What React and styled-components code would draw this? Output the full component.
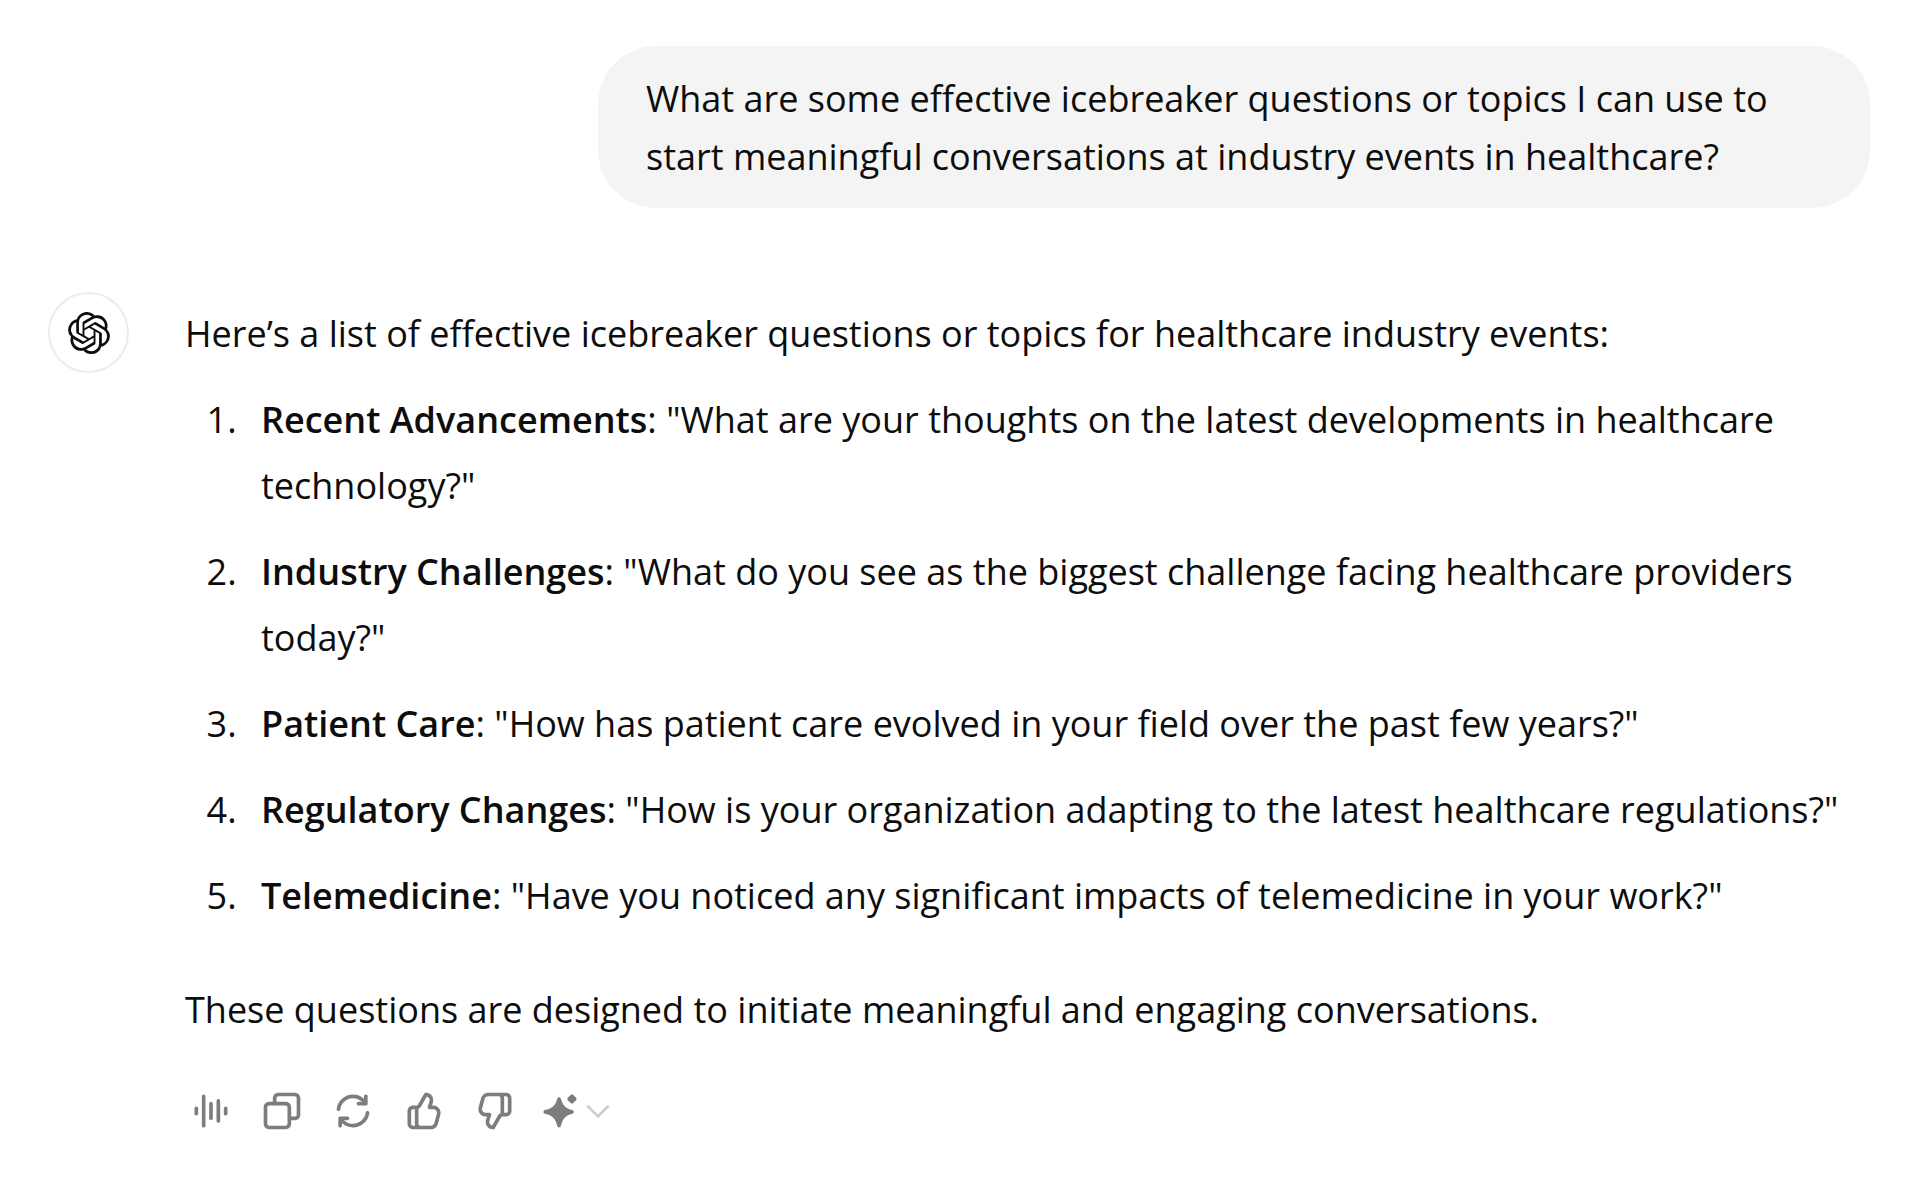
import React from "react";
import styled, { createGlobalStyle } from "styled-components";
import { SiOpenai } from "react-icons/si";

const GlobalStyle = createGlobalStyle`
  * {
    box-sizing: border-box;
  }

  body {
    margin: 0;
    background: #ffffff;
    color: #0d0d0d;
    font-family: "Open Sans", "Noto Sans", sans-serif;
    font-size: 36px;
  }
`;

const Conversation = styled.main`
  display: flex;
  flex-direction: column;
  gap: 84px;
  padding: 46px 50px 24px 48px;
`;

const UserMessage = styled.div`
  align-self: flex-end;
  width: 70%;
  max-width: 1272px;
  padding: 24px 48px 22px;
  border-radius: 58px;
  background: #f4f4f4;
  line-height: 58px;
`;

const AssistantMessage = styled.article`
  display: flex;
  align-items: flex-start;
  gap: 56px;
`;

const Avatar = styled.div`
  display: flex;
  flex-shrink: 0;
  align-items: center;
  justify-content: center;
  width: 81px;
  height: 81px;
  border: 2px solid #ececec;
  border-radius: 50%;
`;

const Content = styled.div`
  flex: 1;
  min-width: 0;
  padding-top: 9px;
  line-height: 66px;
`;

const Paragraph = styled.p`
  margin: 0;
`;

const TopicList = styled.ol`
  display: flex;
  flex-direction: column;
  gap: 20px;
  margin: 20px 0 48px;
  padding-left: 61px;
`;

const Topic = styled.li`
  padding-left: 15px;
`;

const TopicName = styled.strong`
  font-weight: 600;
`;

const Toolbar = styled.div`
  display: flex;
  align-items: center;
  margin: 32px 0 0 -10px;
`;

const ToolButton = styled.button`
  display: flex;
  align-items: center;
  justify-content: center;
  width: ${(props) => (props.$wide ? "92px" : "71px")};
  height: 72px;
  padding: 0;
  border: 0;
  background: transparent;
  color: #7d7d7d;
  cursor: pointer;
`;

const Icon = styled.svg`
  width: 44px;
  height: 44px;
  fill: currentColor;
`;

const Chevron = styled.svg`
  width: 32px;
  height: 32px;
  fill: none;
  stroke: #cdcdcd;
  stroke-width: 2;
`;

const topics = [
  {
    name: "Recent Advancements",
    question:
      "What are your thoughts on the latest developments in healthcare technology?",
  },
  {
    name: "Industry Challenges",
    question:
      "What do you see as the biggest challenge facing healthcare providers today?",
  },
  {
    name: "Patient Care",
    question:
      "How has patient care evolved in your field over the past few years?",
  },
  {
    name: "Regulatory Changes",
    question:
      "How is your organization adapting to the latest healthcare regulations?",
  },
  {
    name: "Telemedicine",
    question:
      "Have you noticed any significant impacts of telemedicine in your work?",
  },
];

const THUMB =
  "M12.1318 2.50389C12.3321 2.15338 12.7235 1.95768 13.124 2.00775L13.5778 2.06447C16.0449 2.37286 17.636 4.83353 16.9048 7.20993L16.354 9H17.0722C19.7097 9 21.6253 11.5079 20.9313 14.0525L19.5677 19.0525C19.0931 20.7927 17.5124 22 15.7086 22H6C4.34315 22 3 20.6568 3 19V12C3 10.3431 4.34315 9 6 9H8C8.25952 9 8.49914 8.86094 8.6279 8.63561L12.1318 2.50389ZM10 20H15.7086C16.6105 20 17.4008 19.3964 17.6381 18.5262L19.0018 13.5262C19.3488 12.2539 18.391 11 17.0722 11H15C14.6827 11 14.3841 10.8494 14.1956 10.5941C14.0071 10.3388 13.9509 10.0092 14.0442 9.70591L14.9932 6.62175C15.3384 5.49984 14.6484 4.34036 13.5319 4.08468L10.3644 9.62789C10.0522 10.1742 9.56691 10.5859 9 10.8098V19C9 19.5523 9.44772 20 10 20ZM7 11V19C7 19.3506 7.06015 19.6872 7.17071 20H6C5.44772 20 5 19.5523 5 19V12C5 11.4477 5.44772 11 6 11H7Z";

const ARROW =
  "M3.07 10.876C3.62 6.436 7.41 3 12 3C14.28 3 16.39 3.85 18 5.254V4C18 3.448 18.448 3 19 3C19.552 3 20 3.448 20 4V8C20 8.552 19.552 9 19 9H15C14.448 9 14 8.552 14 8C14 7.448 14.448 7 15 7H16.957C15.676 5.762 13.924 5 12 5C8.435 5 5.487 7.671 5.055 11.123C4.987 11.672 4.487 12.061 3.939 11.992C3.391 11.924 3.002 11.424 3.07 10.876Z";

const VoiceIcon = () => (
  <Icon viewBox="0 0 24 24">
    <rect x="3" y="9.5" width="2" height="5" rx="1" />
    <rect x="7" y="3" width="2" height="18" rx="1" />
    <rect x="11" y="7" width="2" height="10" rx="1" />
    <rect x="15" y="5.5" width="2" height="13" rx="1" />
    <rect x="19" y="9.5" width="2" height="5" rx="1" />
  </Icon>
);

const CopyIcon = () => (
  <Icon viewBox="0 0 24 24">
    <path
      fillRule="evenodd"
      d="M7 5C7 3.34315 8.34315 2 10 2H19C20.6569 2 22 3.34315 22 5V14C22 15.6569 20.6569 17 19 17H17V19C17 20.6569 15.6569 22 14 22H5C3.34315 22 2 20.6569 2 19V10C2 8.34315 3.34315 7 5 7H7V5ZM9 7H14C15.6569 7 17 8.34315 17 10V15H19C19.5523 15 20 14.5523 20 14V5C20 4.44772 19.5523 4 19 4H10C9.44772 4 9 4.44772 9 5V7ZM5 9C4.44772 9 4 9.44772 4 10V19C4 19.5523 4.44772 20 5 20H14C14.5523 20 15 19.5523 15 19V10C15 9.44772 14.5523 9 14 9H5Z"
    />
  </Icon>
);

const RegenerateIcon = () => (
  <Icon viewBox="0 0 24 24">
    <path d={ARROW} />
    <path d={ARROW} transform="rotate(180 12 12)" />
  </Icon>
);

const ThumbIcon = ({ down }) => (
  <Icon viewBox="0 0 24 24">
    <path
      fillRule="evenodd"
      d={THUMB}
      transform={down ? "rotate(180 12 12)" : undefined}
    />
  </Icon>
);

const SparkleIcon = () => (
  <Icon viewBox="0 0 24 24">
    <path d="M11.5 4.5C12 4.5 12.4 4.8 12.5 5.3C13.4 8.9 15.1 10.6 18.7 11.5C19.2 11.6 19.5 12 19.5 12.5C19.5 13 19.2 13.4 18.7 13.5C15.1 14.4 13.4 16.1 12.5 20.2C12.4 20.7 12 21 11.5 21C11 21 10.6 20.7 10.5 20.2C9.6 16.1 7.9 14.4 3.8 13.5C3.3 13.4 3 13 3 12.5C3 12 3.3 11.6 3.8 11.5C7.9 10.6 9.6 8.9 10.5 5.3C10.6 4.8 11 4.5 11.5 4.5Z" />
    <path d="M18.5 3C19 3 19.4 3.3 19.8 3.9C20.5 4.3 21 4.8 21 5.4C21 6 20.5 6.5 19.8 6.9C19.4 7.5 19 7.9 18.5 7.9C18 7.9 17.6 7.5 17.2 6.9C16.5 6.5 16 6 16 5.4C16 4.8 16.5 4.3 17.2 3.9C17.6 3.3 18 3 18.5 3Z" />
  </Icon>
);

const App = () => {
  return (
    <>
      <GlobalStyle />
      <Conversation>
        <UserMessage>
          What are some effective icebreaker questions or topics I can use to
          start meaningful conversations at industry events in healthcare?
        </UserMessage>
        <AssistantMessage>
          <Avatar>
            <SiOpenai size={42} />
          </Avatar>
          <Content>
            <Paragraph>
              Here’s a list of effective icebreaker questions or topics for
              healthcare industry events:
            </Paragraph>
            <TopicList>
              {topics.map((topic) => (
                <Topic key={topic.name}>
                  <TopicName>{topic.name}</TopicName>
                  {`: "${topic.question}"`}
                </Topic>
              ))}
            </TopicList>
            <Paragraph>
              These questions are designed to initiate meaningful and engaging
              conversations.
            </Paragraph>
            <Toolbar>
              <ToolButton aria-label="Read aloud">
                <VoiceIcon />
              </ToolButton>
              <ToolButton aria-label="Copy">
                <CopyIcon />
              </ToolButton>
              <ToolButton aria-label="Regenerate">
                <RegenerateIcon />
              </ToolButton>
              <ToolButton aria-label="Good response">
                <ThumbIcon />
              </ToolButton>
              <ToolButton aria-label="Bad response">
                <ThumbIcon down />
              </ToolButton>
              <ToolButton aria-label="Change model" $wide>
                <SparkleIcon />
                <Chevron viewBox="0 0 24 24">
                  <path d="M4 8L12 16L20 8" />
                </Chevron>
              </ToolButton>
            </Toolbar>
          </Content>
        </AssistantMessage>
      </Conversation>
    </>
  );
};

export default App;
